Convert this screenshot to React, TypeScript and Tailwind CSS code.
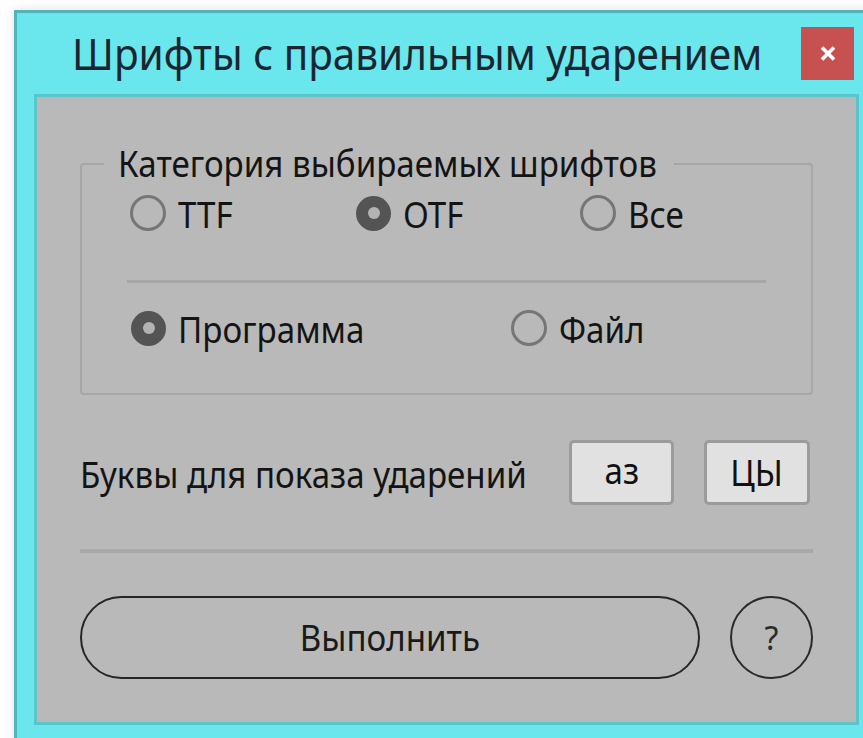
import React, { useState } from 'react';

const font = { fontFamily: '"Noto Sans", "Open Sans", sans-serif' };

type RadioProps = {
  label: string;
  checked: boolean;
  onSelect: () => void;
};

// narrow text, the dialog font runs condensed
const Narrow: React.FC<{ children: React.ReactNode; className?: string }> = ({ children, className = '' }) => (
  <span className={`inline-block whitespace-nowrap scale-x-[0.92] ${className}`}>{children}</span>
);

const Radio: React.FC<RadioProps> = ({ label, checked, onSelect }) => (
  <button onClick={onSelect} className="flex items-center gap-[12px] text-left">
    {checked ? (
      <span className="w-[35px] h-[35px] rounded-full bg-[#545454] flex items-center justify-center">
        <span className="w-[12px] h-[12px] rounded-full bg-[#b3b3b3]"></span>
      </span>
    ) : (
      <span className="w-[36px] h-[36px] rounded-full border-[3px] border-[#767676]"></span>
    )}
    <Narrow className="origin-left text-[36px] leading-none text-[#141414] pt-[4px]">{label}</Narrow>
  </button>
);

export default function App() {
  const [format, setFormat] = useState('otf');
  const [source, setSource] = useState('program');

  return (
    <div className="w-[863px] h-[738px] bg-white overflow-hidden" style={font}>
      {/* window frame */}
      <div className="ml-[14px] mt-[10px] w-[866px] h-[760px] bg-[#69e7ec] border-[3px] border-[#50b4ba] shadow-[0_0_10px_rgba(0,0,0,0.12)]">
        {/* title bar */}
        <div className="flex items-center h-[81px] pl-[17px] pr-[23px]">
          <div className="flex-1 text-center text-[44px] leading-none text-[#1b2631] pb-[2px]">
            <Narrow className="origin-center">Шрифты с правильным ударением</Narrow>
          </div>
          <button className="w-[53px] h-[53px] bg-[#c75050] flex items-center justify-center">
            <svg width="16" height="15" viewBox="0 0 16 15">
              <path d="M2 1.5 L14 13.5 M14 1.5 L2 13.5" stroke="#fff" strokeWidth="3.6" />
            </svg>
          </button>
        </div>

        {/* dialog body */}
        <div className="ml-[17px] w-[825px] h-[631px] bg-[#b9b9b9] border-[3px] border-[#5ac5cb] px-[43px] pt-[49px]">
          <fieldset className="border-2 border-[#a6a6a6] rounded-[4px] h-[249px] px-0 pt-[11px]">
            <legend className="ml-[22px] px-[14px] text-[36px] leading-none text-[#141414]">
              <Narrow className="origin-left -mr-[44px]">Категория выбираемых шрифтов</Narrow>
            </legend>
            <div className="grid grid-cols-[226px_224px_1fr] pl-[48px]">
              <Radio label="TTF" checked={format === 'ttf'} onSelect={() => setFormat('ttf')} />
              <Radio label="OTF" checked={format === 'otf'} onSelect={() => setFormat('otf')} />
              <Radio label="Все" checked={format === 'all'} onSelect={() => setFormat('all')} />
            </div>
            <div className="mx-[45px] mt-[47px] h-[3px] bg-[#a7a7a7]"></div>
            <div className="grid grid-cols-[380px_1fr] pl-[49px] mt-[25px]">
              <Radio label="Программа" checked={source === 'program'} onSelect={() => setSource('program')} />
              <Radio label="Файл" checked={source === 'file'} onSelect={() => setSource('file')} />
            </div>
          </fieldset>

          {/* letters row */}
          <div className="flex items-center mt-[45px] h-[65px]">
            <span className="flex-1 text-[36px] leading-none text-[#141414] pt-[4px]">
              <Narrow className="origin-left">Буквы для показа ударений</Narrow>
            </span>
            <button className="w-[105px] h-[65px] bg-[#e1e1e1] border-[3px] border-[#9b9b9b] rounded-[5px] text-[36px] leading-none text-[#111] pb-[4px]">
              <Narrow className="origin-center">аз</Narrow>
            </button>
            <button className="ml-[30px] mr-[3px] w-[106px] h-[65px] bg-[#e1e1e1] border-[3px] border-[#9b9b9b] rounded-[5px] text-[36px] leading-none text-[#111]">
              <Narrow className="origin-center">ЦЫ</Narrow>
            </button>
          </div>

          <div className="mt-[44px] h-[4px] bg-[#a8a8a8]"></div>

          {/* actions */}
          <div className="flex items-center mt-[43px]">
            <button className="w-[620px] h-[83px] rounded-full border-2 border-[#262626] text-[36px] leading-none text-[#1a1a1a]">
              <Narrow className="origin-center scale-x-[0.88]">Выполнить</Narrow>
            </button>
            <button className="ml-[30px] w-[83px] h-[83px] rounded-full border-2 border-[#2a2a2a] text-[32px] leading-none text-[#2a2a2a]">
              ?
            </button>
          </div>
        </div>
      </div>
    </div>
  );
}
